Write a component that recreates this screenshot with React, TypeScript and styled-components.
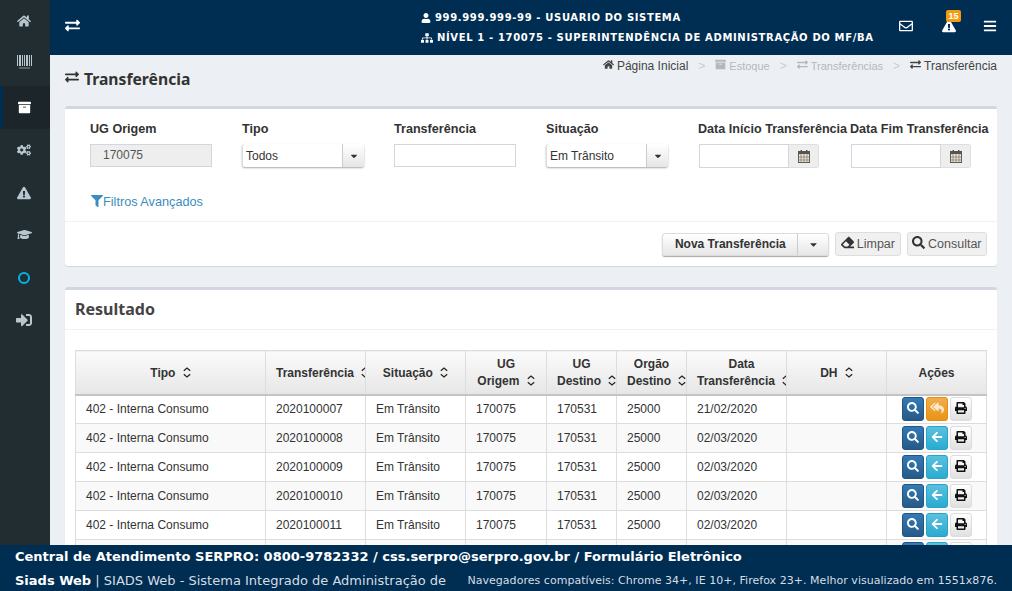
import React from 'react';
import styled, { createGlobalStyle } from 'styled-components';
import {
  FaArchive,
  FaArrowLeft,
  FaBars,
  FaCaretDown,
  FaCogs,
  FaEraser,
  FaExchangeAlt,
  FaExclamationTriangle,
  FaFilter,
  FaGraduationCap,
  FaHome,
  FaPrint,
  FaRegEnvelope,
  FaReplyAll,
  FaSearch,
  FaSignInAlt,
  FaSitemap,
  FaUser,
} from 'react-icons/fa';

const GlobalStyle = createGlobalStyle`
  html, body {
    margin: 0;
    height: 100%;
    overflow: hidden;
  }
  body {
    font-family: "Liberation Sans", Arial, sans-serif;
    font-size: 12px;
    color: #333;
  }
  * {
    box-sizing: border-box;
  }
`;

const Shell = styled.div`
  width: 1012px;
  height: 591px;
  display: grid;
  grid-template-rows: 545px 46px;
  overflow: hidden;
`;

const Top = styled.div`
  display: grid;
  grid-template-columns: 50px 1fr;
  min-height: 0;
`;

const Sidebar = styled.nav`
  background: #222d32;
  display: flex;
  flex-direction: column;
`;

const SideItem = styled.div<{ $active?: boolean; $lift: number; $size: number }>`
  height: 43px;
  display: flex;
  align-items: center;
  justify-content: center;
  font-size: ${p => p.$size}px;
  color: ${p => (p.$active ? '#fff' : '#b8c7ce')};
  background: ${p => (p.$active ? '#1c2529' : 'transparent')};
  border-left: 3px solid ${p => (p.$active ? '#002d52' : 'transparent')};
  padding: 0 5px ${p => p.$lift}px 0;
`;

const Main = styled.div`
  display: flex;
  flex-direction: column;
  min-width: 0;
  min-height: 0;
  background: #ecf0f5;
  overflow: hidden;
`;

const Header = styled.header`
  height: 55px;
  flex: none;
  background: #002d52;
  color: #fff;
  display: flex;
  align-items: center;
  padding: 0 15px;
`;

const HeaderToggle = styled.div`
  font-size: 15px;
  display: flex;
  width: 356px;
  margin-bottom: 4px;
`;

const Identity = styled.div`
  flex: 1;
  display: flex;
  flex-direction: column;
  gap: 7px;
  font-family: "DejaVu Sans", sans-serif;
  font-weight: 700;
  font-size: 10px;
  line-height: 13px;
  letter-spacing: 0.64px;
`;

const IdentityLine = styled.div<{ $icon: number }>`
  display: flex;
  align-items: center;
  gap: 4px;
  white-space: nowrap;
  svg {
    font-size: ${p => p.$icon}px;
  }
`;

const HeaderIcon = styled.div<{ $gap: number }>`
  position: relative;
  display: flex;
  font-size: 14px;
  margin: 0 0 4px ${p => p.$gap}px;
`;

const Badge = styled.span`
  position: absolute;
  top: -9px;
  left: 4px;
  width: 15px;
  height: 12px;
  border-radius: 2px;
  background: #f39c12;
  color: #fff;
  font-size: 9px;
  font-weight: 700;
  line-height: 12px;
  text-align: center;
`;

const Content = styled.div`
  padding: 0 15px;
  flex: 1;
  min-height: 0;
`;

const TitleRow = styled.div`
  height: 51px;
  display: flex;
  justify-content: space-between;
  align-items: flex-start;
`;

const Title = styled.h1`
  margin: 14px 0 0;
  font-family: "Noto Sans", sans-serif;
  font-size: 15.7px;
  line-height: 20px;
  font-weight: 700;
  color: #333;
  display: flex;
  align-items: center;
  gap: 5px;
  svg {
    font-size: 14px;
    margin-top: -5px;
  }
`;

const Breadcrumb = styled.div`
  display: flex;
  align-items: center;
  margin-top: 3px;
  height: 15px;
  color: #444;
  white-space: nowrap;
`;

const Crumb = styled.span<{ $muted?: boolean }>`
  display: inline-flex;
  align-items: center;
  gap: 3px;
  font-size: ${p => (p.$muted ? 11 : 12)}px;
  color: ${p => (p.$muted ? '#b5b8bb' : '#444')};
  svg {
    font-size: 11px;
    margin-top: -3px;
  }
`;

const CrumbSep = styled.span`
  color: #ccc;
  padding: 0 10px;
`;

const Panel = styled.section`
  background: #fff;
  border-top: 3px solid #d2d6de;
  border-radius: 3px;
  box-shadow: 0 1px 1px rgba(0, 0, 0, 0.1);
  margin-bottom: 21px;
`;

const FilterGrid = styled.div`
  height: 113px;
  padding: 13px 0 0 25px;
  display: grid;
  grid-template-columns: repeat(6, 152px);
  grid-template-rows: 45px 1fr;
  border-bottom: 1px solid #f2f2f2;
`;

const Field = styled.div`
  display: flex;
  flex-direction: column;
  gap: 7px;
`;

const Label = styled.label`
  font-weight: 700;
  font-size: 12.6px;
  line-height: 15px;
  color: #333;
  white-space: nowrap;
`;

const TextBox = styled.div<{ $disabled?: boolean; $width?: number }>`
  width: ${p => p.$width ?? 122}px;
  height: 24px;
  border: 1px solid #d2d6de;
  background: ${p => (p.$disabled ? '#eee' : '#fff')};
  color: #555;
  font-size: 12px;
  line-height: 20px;
  padding-left: ${p => (p.$disabled ? 12 : 0)}px;
`;

const Select = styled.div`
  width: 122px;
  height: 24px;
  display: flex;
  align-items: center;
  justify-content: space-between;
  border-radius: 3px;
  box-shadow: 0 1px 2px rgba(0, 0, 0, 0.35);
  border-left: 1px solid #ddd;
  padding-left: 3px;
  color: #333;
  font-size: 12px;
`;

const SelectCaret = styled.span`
  width: 22px;
  height: 100%;
  display: flex;
  align-items: center;
  justify-content: center;
  font-size: 10px;
  border-left: 1px solid #ccc;
  border-radius: 0 3px 3px 0;
  background: linear-gradient(#fff, #e6e6e6);
`;

const DateGroup = styled.div`
  display: flex;
  width: 120px;
  height: 24px;
  margin-left: 1px;
`;

const CalendarAddon = styled.span`
  width: 30px;
  display: flex;
  align-items: center;
  justify-content: center;
  background: #eee;
  border: 1px solid #ddd;
  border-left: 0;
  border-radius: 0 3px 3px 0;
`;

const FilterLink = styled.a`
  grid-column: 1 / span 2;
  align-self: start;
  margin-top: 28px;
  display: flex;
  align-items: center;
  font-size: 12.7px;
  line-height: 15px;
  color: #3c8dbc;
  svg {
    font-size: 12px;
    margin: -4px 0 0 1px;
  }
`;

const ActionBar = styled.div`
  height: 44px;
  padding: 10px 10px 0;
  display: flex;
  justify-content: flex-end;
  align-items: flex-start;
  gap: 6px;
`;

const SplitButton = styled.div`
  display: flex;
  height: 23px;
  margin-top: 1px;
  border-radius: 3px;
  box-shadow: 0 1px 1px rgba(0, 0, 0, 0.35);
  border: 1px solid #ddd;
  background: linear-gradient(#fff, #e6e6e6);
  font-weight: 700;
  color: #333;
`;

const SplitLabel = styled.span`
  width: 134px;
  display: flex;
  align-items: center;
  justify-content: center;
  padding-bottom: 2px;
  font-size: 12px;
`;

const SplitCaret = styled.span`
  width: 31px;
  display: flex;
  align-items: center;
  justify-content: center;
  font-size: 11px;
  border-left: 1px solid #ccc;
`;

const GhostButton = styled.div`
  height: 24px;
  padding: 0 4.5px;
  display: flex;
  align-items: center;
  gap: 3px;
  font-size: 12.5px;
  color: #555;
  background: #f0f0f0;
  border: 1px solid #ddd;
  border-radius: 3px;
  svg {
    font-size: 13px;
    color: #333;
    margin-top: -3px;
  }
`;

const PanelTitle = styled.h2`
  margin: 0;
  height: 40px;
  padding: 0 10px 2px;
  display: flex;
  align-items: center;
  font-family: "Noto Sans", sans-serif;
  font-size: 16px;
  font-weight: 700;
  color: #444;
  border-bottom: 1px solid #f2f2f2;
`;

const TableWrap = styled.div`
  padding: 20px 10px 0;
`;

const Table = styled.table`
  width: 911px;
  table-layout: fixed;
  border-collapse: collapse;
`;

const Column = styled.col<{ $width: number }>`
  width: ${p => p.$width}px;
`;

const Th = styled.th<{ $left?: boolean }>`
  height: 44px;
  padding: 2px ${p => (p.$left ? '0 0 10px' : '10px 0')};
  font-size: 12px;
  line-height: 17px;
  font-weight: 700;
  color: #333;
  text-align: ${p => (p.$left ? 'left' : 'center')};
  border: 1px solid #ddd;
  border-bottom: 2px solid #c4c4c4;
  background: linear-gradient(#fbfbfb, #e6e6e6);
  overflow: hidden;
  white-space: nowrap;
`;

const ThCaption = styled.span`
  display: block;
  text-align: center;
`;

const SortIcon = styled.svg`
  width: 8px;
  height: 11px;
  margin-left: 4px;
  vertical-align: -1px;
  fill: none;
  stroke: #222;
  stroke-width: 1.2;
`;

const Td = styled.td`
  height: 29px;
  padding: 0 10px;
  font-size: 12px;
  color: #333;
  border: 1px solid #ddd;
  white-space: nowrap;
`;

const Row = styled.tr<{ $stripe: boolean }>`
  background: ${p => (p.$stripe ? '#f9f9f9' : '#fff')};
`;

const Actions = styled.div`
  display: flex;
  justify-content: center;
  gap: 2px;
`;

const variants = {
  primary: { bg: 'linear-gradient(#337ab7, #265a88)', border: '#245580', color: '#fff', size: 12 },
  warning: { bg: 'linear-gradient(#f0ad4e, #eb9316)', border: '#e38d13', color: '#ffe9cc', size: 14 },
  info: { bg: 'linear-gradient(#5bc0de, #2aabd2)', border: '#28a4c9', color: '#fff', size: 12 },
  plain: { bg: 'linear-gradient(#fff, #e0e0e0)', border: '#ddd', color: '#111', size: 12 },
};

const IconButton = styled.span<{ $variant: keyof typeof variants }>`
  width: 22px;
  height: 24px;
  display: flex;
  align-items: center;
  justify-content: center;
  font-size: ${p => variants[p.$variant].size}px;
  border-radius: 3px;
  color: ${p => variants[p.$variant].color};
  background: ${p => variants[p.$variant].bg};
  border: 1px solid ${p => variants[p.$variant].border};
  svg {
    margin-top: -3px;
  }
`;

const Footer = styled.footer`
  background: #002d52;
  color: #fff;
  padding: 0 15px;
  font-family: "DejaVu Sans", sans-serif;
  overflow: hidden;
`;

const FooterLead = styled.div`
  height: 23px;
  padding-top: 4px;
  font-size: 13px;
  line-height: 16px;
  font-weight: 700;
  white-space: nowrap;
`;

const FooterRow = styled.div`
  height: 23px;
  padding-top: 1px;
  display: flex;
  align-items: center;
  justify-content: space-between;
  white-space: nowrap;
`;

const FooterApp = styled.span`
  font-size: 13px;
  color: #d5dde5;
  b {
    color: #fff;
  }
`;

const FooterNote = styled.span`
  font-size: 11px;
  letter-spacing: 0.034px;
  color: #d5dde5;
  margin-top: 1px;
`;

const BarcodeIcon = () => (
  <svg width="15" height="14" viewBox="0 0 15 14" fill="currentColor">
    <rect x="0" y="0" width="1" height="11" />
    <rect x="2" y="0" width="2" height="11" />
    <rect x="5" y="0" width="1" height="11" />
    <rect x="7" y="0" width="1" height="11" />
    <rect x="9" y="0" width="2" height="11" />
    <rect x="12" y="0" width="1" height="11" />
    <rect x="14" y="0" width="1" height="11" />
    <rect x="2" y="12.5" width="11" height="1" opacity="0.7" />
  </svg>
);

const RingIcon = () => (
  <svg width="12" height="12" viewBox="0 0 12 12" fill="none" stroke="#00b4e6" strokeWidth="2">
    <circle cx="6" cy="6" r="5" />
  </svg>
);

const CalendarIcon = () => (
  <svg width="12" height="13" viewBox="0 0 12 13">
    <rect x="0.5" y="1.5" width="11" height="11" fill="#f3e3cc" stroke="#555" />
    <rect x="0" y="1" width="12" height="3" fill="#555" />
    <rect x="2.5" y="0" width="1.5" height="3" fill="#555" />
    <rect x="8" y="0" width="1.5" height="3" fill="#555" />
    <path d="M0 7h12M0 10h12M3 4v9M6 4v9M9 4v9" stroke="#777" strokeWidth="0.7" />
  </svg>
);

const Sort = () => (
  <SortIcon viewBox="0 0 8 11">
    <path d="M.8 3.8 4 1l3.2 2.8M.8 7.2 4 10l3.2-2.8" />
  </SortIcon>
);

const sideItems = [
  { icon: <FaHome />, lift: 1, size: 14 },
  { icon: <BarcodeIcon />, lift: 5, size: 14 },
  { icon: <FaArchive />, lift: 1, active: true, size: 13 },
  { icon: <FaCogs />, lift: 1, size: 14 },
  { icon: <FaExclamationTriangle />, lift: 1, size: 14 },
  { icon: <FaGraduationCap />, lift: 5, size: 15 },
  { icon: <RingIcon />, lift: 3, size: 14 },
  { icon: <FaSignInAlt />, lift: 5, size: 16 },
];

const widths = [190, 100, 100, 81, 70, 70, 100, 100, 100];

const rows = [
  { id: '2020100007', orgao: '25000', date: '21/02/2020', returned: true },
  { id: '2020100008', orgao: '25000', date: '02/03/2020' },
  { id: '2020100009', orgao: '25000', date: '02/03/2020' },
  { id: '2020100010', orgao: '25000', date: '02/03/2020' },
  { id: '2020100011', orgao: '25000', date: '02/03/2020' },
  { id: '2020100012', orgao: '25000', date: '02/03/2020' },
];

export default function App() {
  return (
    <Shell>
      <GlobalStyle />
      <Top>
        <Sidebar>
          {sideItems.map((item, i) => (
            <SideItem key={i} $active={item.active} $lift={item.lift} $size={item.size}>
              {item.icon}
            </SideItem>
          ))}
        </Sidebar>
        <Main>
          <Header>
            <HeaderToggle>
              <FaExchangeAlt />
            </HeaderToggle>
            <Identity>
              <IdentityLine $icon={10}>
                <FaUser /> 999.999.999-99 - USUARIO DO SISTEMA
              </IdentityLine>
              <IdentityLine $icon={12}>
                <FaSitemap /> NÍVEL 1 - 170075 - SUPERINTENDÊNCIA DE ADMINISTRAÇÃO DO MF/BA
              </IdentityLine>
            </Identity>
            <HeaderIcon $gap={1}>
              <FaRegEnvelope />
            </HeaderIcon>
            <HeaderIcon $gap={29}>
              <FaExclamationTriangle />
              <Badge>15</Badge>
            </HeaderIcon>
            <HeaderIcon $gap={27}>
              <FaBars />
            </HeaderIcon>
          </Header>
          <Content>
            <TitleRow>
              <Title>
                <FaExchangeAlt /> Transferência
              </Title>
              <Breadcrumb>
                <Crumb>
                  <FaHome /> Página Inicial
                </Crumb>
                <CrumbSep>&gt;</CrumbSep>
                <Crumb $muted>
                  <FaArchive /> Estoque
                </Crumb>
                <CrumbSep>&gt;</CrumbSep>
                <Crumb $muted>
                  <FaExchangeAlt /> Transferências
                </Crumb>
                <CrumbSep>&gt;</CrumbSep>
                <Crumb>
                  <FaExchangeAlt /> Transferência
                </Crumb>
              </Breadcrumb>
            </TitleRow>

            <Panel>
              <FilterGrid>
                <Field>
                  <Label>UG Origem</Label>
                  <TextBox $disabled>170075</TextBox>
                </Field>
                <Field>
                  <Label>Tipo</Label>
                  <Select>
                    Todos
                    <SelectCaret>
                      <FaCaretDown />
                    </SelectCaret>
                  </Select>
                </Field>
                <Field>
                  <Label>Transferência</Label>
                  <TextBox />
                </Field>
                <Field>
                  <Label>Situação</Label>
                  <Select>
                    Em Trânsito
                    <SelectCaret>
                      <FaCaretDown />
                    </SelectCaret>
                  </Select>
                </Field>
                <Field>
                  <Label>Data Início Transferência</Label>
                  <DateGroup>
                    <TextBox $width={90} />
                    <CalendarAddon>
                      <CalendarIcon />
                    </CalendarAddon>
                  </DateGroup>
                </Field>
                <Field>
                  <Label>Data Fim Transferência</Label>
                  <DateGroup>
                    <TextBox $width={90} />
                    <CalendarAddon>
                      <CalendarIcon />
                    </CalendarAddon>
                  </DateGroup>
                </Field>
                <FilterLink>
                  <FaFilter />
                  Filtros Avançados
                </FilterLink>
              </FilterGrid>
              <ActionBar>
                <SplitButton>
                  <SplitLabel>Nova Transferência</SplitLabel>
                  <SplitCaret>
                    <FaCaretDown />
                  </SplitCaret>
                </SplitButton>
                <GhostButton>
                  <FaEraser /> Limpar
                </GhostButton>
                <GhostButton>
                  <FaSearch /> Consultar
                </GhostButton>
              </ActionBar>
            </Panel>

            <Panel>
              <PanelTitle>Resultado</PanelTitle>
              <TableWrap>
                <Table>
                  <colgroup>
                    {widths.map((w, i) => (
                      <Column key={i} $width={w} />
                    ))}
                  </colgroup>
                  <thead>
                    <tr>
                      <Th>Tipo <Sort /></Th>
                      <Th $left>Transferência <Sort /></Th>
                      <Th>Situação <Sort /></Th>
                      <Th>UG<br />Origem <Sort /></Th>
                      <Th>UG<br />Destino <Sort /></Th>
                      <Th>Orgão<br />Destino <Sort /></Th>
                      <Th $left>
                        <ThCaption>Data</ThCaption>
                        Transferência <Sort />
                      </Th>
                      <Th>DH <Sort /></Th>
                      <Th>Ações</Th>
                    </tr>
                  </thead>
                  <tbody>
                    {rows.map((row, i) => (
                      <Row key={row.id} $stripe={i % 2 === 1}>
                        <Td>402 - Interna Consumo</Td>
                        <Td>{row.id}</Td>
                        <Td>Em Trânsito</Td>
                        <Td>170075</Td>
                        <Td>170531</Td>
                        <Td>{row.orgao}</Td>
                        <Td>{row.date}</Td>
                        <Td />
                        <Td>
                          <Actions>
                            <IconButton $variant="primary">
                              <FaSearch />
                            </IconButton>
                            {row.returned ? (
                              <IconButton $variant="warning">
                                <FaReplyAll />
                              </IconButton>
                            ) : (
                              <IconButton $variant="info">
                                <FaArrowLeft />
                              </IconButton>
                            )}
                            <IconButton $variant="plain">
                              <FaPrint />
                            </IconButton>
                          </Actions>
                        </Td>
                      </Row>
                    ))}
                  </tbody>
                </Table>
              </TableWrap>
            </Panel>
          </Content>
        </Main>
      </Top>
      <Footer>
        <FooterLead>
          Central de Atendimento SERPRO: 0800-9782332 / css.serpro@serpro.gov.br / Formulário Eletrônico
        </FooterLead>
        <FooterRow>
          <FooterApp>
            <b>Siads Web</b> | SIADS Web - Sistema Integrado de Administração de
          </FooterApp>
          <FooterNote>
            Navegadores compatíveis: Chrome 34+, IE 10+, Firefox 23+. Melhor visualizado em 1551x876.
          </FooterNote>
        </FooterRow>
      </Footer>
    </Shell>
  );
}
